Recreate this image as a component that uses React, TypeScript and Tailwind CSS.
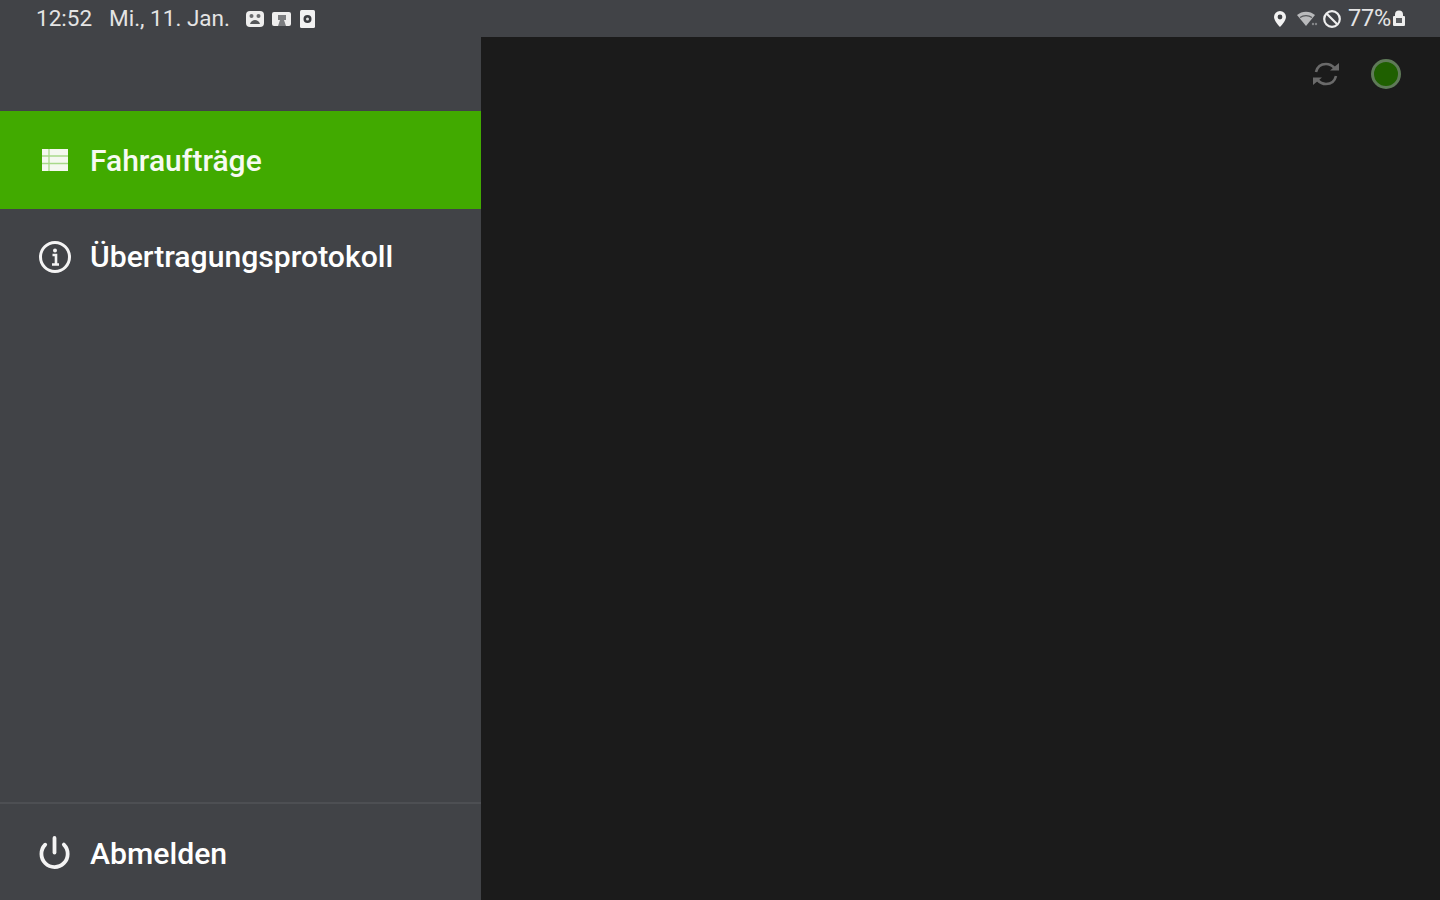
import { Power } from 'lucide-react';

function StatusIcons() {
  return (
    <div className="ml-[15px] flex items-center gap-[6px]">
      <svg width="20" height="18" viewBox="0 0 20 18">
        <rect x="1" y="1" width="18" height="16" rx="4" fill="#eeeeee" />
        <circle cx="6.500" cy="6" r="2" fill="#6b6d70" />
        <circle cx="13.500" cy="6" r="2" fill="#6b6d70" />
        <path d="M5 14c1-3 3-4 5-4s4 1 5 4z" fill="#55575a" />
      </svg>
      <svg width="21" height="18" viewBox="0 0 21 18">
        <rect x="1" y="2" width="19" height="14" rx="2" fill="#eeeeee" />
        <rect x="7" y="5" width="8" height="5" fill="#7b7d80" />
        <path d="M7 16l2-6h4l2 6z" fill="#7b7d80" />
      </svg>
      <svg width="17" height="20" viewBox="0 0 17 20" className="ml-[1px]">
        <rect x="1" y="1" width="15" height="18" rx="1.500" fill="#f2f2f2" />
        <circle cx="8.500" cy="10" r="4" fill="#3a3c40" />
        <circle cx="8.500" cy="10" r="1.500" fill="#dddddd" />
      </svg>
    </div>
  );
}

function StatusRight() {
  return (
    <div className="flex items-center">
      <svg width="14" height="18" viewBox="0 0 14 18" className="mr-[9px]">
        <path fillRule="evenodd" d="M7 1a6 6 0 0 1 6 6c0 4-6 10-6 10S1 11 1 7a6 6 0 0 1 6-6zm0 3.600a2.400 2.400 0 1 0 0 4.800 2.400 2.400 0 0 0 0-4.800z" fill="#f2f2f2" />
      </svg>
      <svg width="22" height="18" viewBox="0 0 22 18" className="mr-[4px]">
        <path d="M1 5c5-4.500 13-4.500 18 0l-9 11z" fill="#b9babc" />
        <path d="M4 7.500c3.500-2.500 8.500-2.500 12 0" stroke="#56585b" strokeWidth="1.200" fill="none" />
        <circle cx="17" cy="14" r="1.200" fill="#85878a" />
        <circle cx="20" cy="14" r="1.200" fill="#85878a" />
      </svg>
      <svg width="20" height="20" viewBox="0 0 20 20" className="mr-[6px]">
        <circle cx="10" cy="10" r="7.800" fill="none" stroke="#eeeeee" strokeWidth="2.200" />
        <path d="M4.500 4.500l11 11" stroke="#eeeeee" strokeWidth="2.200" />
      </svg>
      <span className="text-[23.500px] leading-none tracking-[-0.2px] text-[#e4e4e4]">77%</span>
      <svg width="14" height="17" viewBox="0 0 14 17" className="ml-[1px]">
        <path fillRule="evenodd" d="M3 6V4.500a4 4 0 0 1 8 0V6h1a1 1 0 0 1 1 1v8a1 1 0 0 1-1 1H2a1 1 0 0 1-1-1V7a1 1 0 0 1 1-1z" fill="#eeeeee" />
        <rect x="4" y="8" width="6" height="5" fill="#5c5e61" />
      </svg>
    </div>
  );
}

function TableIcon() {
  return (
    <svg width="26" height="24" viewBox="0 0 26 24">
      <rect x="0" y="1" width="26" height="22" fill="#f4f8f0" />
      <path d="M0 8h26M0 15.500h26M7 1v22" stroke="#a8d98a" strokeWidth="1.300" />
    </svg>
  );
}

function InfoIcon() {
  return (
    <svg width="34" height="34" viewBox="0 0 34 34" fill="none">
      <circle cx="17" cy="17" r="14.500" stroke="#f4f4f4" strokeWidth="3" />
      <circle cx="17" cy="10.500" r="2" fill="#f4f4f4" />
      <path d="M14.500 15h3.500v9M14 24.500h7" stroke="#f4f4f4" strokeWidth="2.600" />
    </svg>
  );
}

function SyncIcon() {
  return (
    <svg width="30" height="30" viewBox="0 0 30 28" fill="none" stroke="#6a6a6a" strokeWidth="2.600">
      <path d="M5 12c1.200-5 5-8 10-8 3.500 0 6 1.300 8.500 4" />
      <path d="M25 16c-1.200 5-5 8-10 8-3.500 0-6-1.300-8.500-4" />
      <path d="M19 10.500h9V3z" fill="#6a6a6a" stroke="none" />
      <path d="M11 17.500H2V25z" fill="#6a6a6a" stroke="none" />
    </svg>
  );
}

export default function App() {
  return (
    <div className="flex h-[900px] w-[1440px] flex-col overflow-hidden bg-[#1b1b1b] font-['Roboto',sans-serif]">
      {/* status bar */}
      <div className="flex h-[37px] shrink-0 items-center justify-between bg-[#414347] pl-[36px] pr-[34px]">
        <div className="flex items-center text-[22.500px] leading-none text-[#e4e4e4]">
          <span>12:52</span>
          <span className="ml-[17px]">Mi., 11. Jan.</span>
          <StatusIcons />
        </div>
        <StatusRight />
      </div>

      <div className="flex min-h-0 flex-1">
        {/* sidebar */}
        <div className="flex w-[481px] shrink-0 flex-col bg-[#414347]">
          <div className="h-[74px] shrink-0" />
          <div className="flex h-[98px] shrink-0 items-center bg-[#41aa00] pl-[42px]">
            <TableIcon />
            <span className="ml-[22px] pt-[2px] text-[30px] font-medium leading-none text-[#f6faf2]">Fahraufträge</span>
          </div>
          <div className="flex h-[96px] shrink-0 items-center pl-[38px]">
            <InfoIcon />
            <span className="ml-[18px] text-[30.150px] font-medium leading-none text-white">Übertragungsprotokoll</span>
          </div>
          <div className="flex-1" />
          <div className="flex h-[98px] shrink-0 items-center border-t-2 border-[#4d4f53] pl-[37px]">
            <Power size={35} strokeWidth={2.600} color="#f4f4f4" />
            <span className="ml-[18px] pt-[4px] text-[30.200px] font-medium leading-none text-white">Abmelden</span>
          </div>
        </div>

        {/* content */}
        <div className="flex min-w-0 flex-1 justify-end">
          <div className="flex h-[74px] items-center gap-[30px] pr-[39px]">
            <SyncIcon />
            <div className="h-[30px] w-[30px] rounded-full border-[3px] border-[#5f7a58] bg-[#1f6000]" />
          </div>
        </div>
      </div>
    </div>
  );
}
